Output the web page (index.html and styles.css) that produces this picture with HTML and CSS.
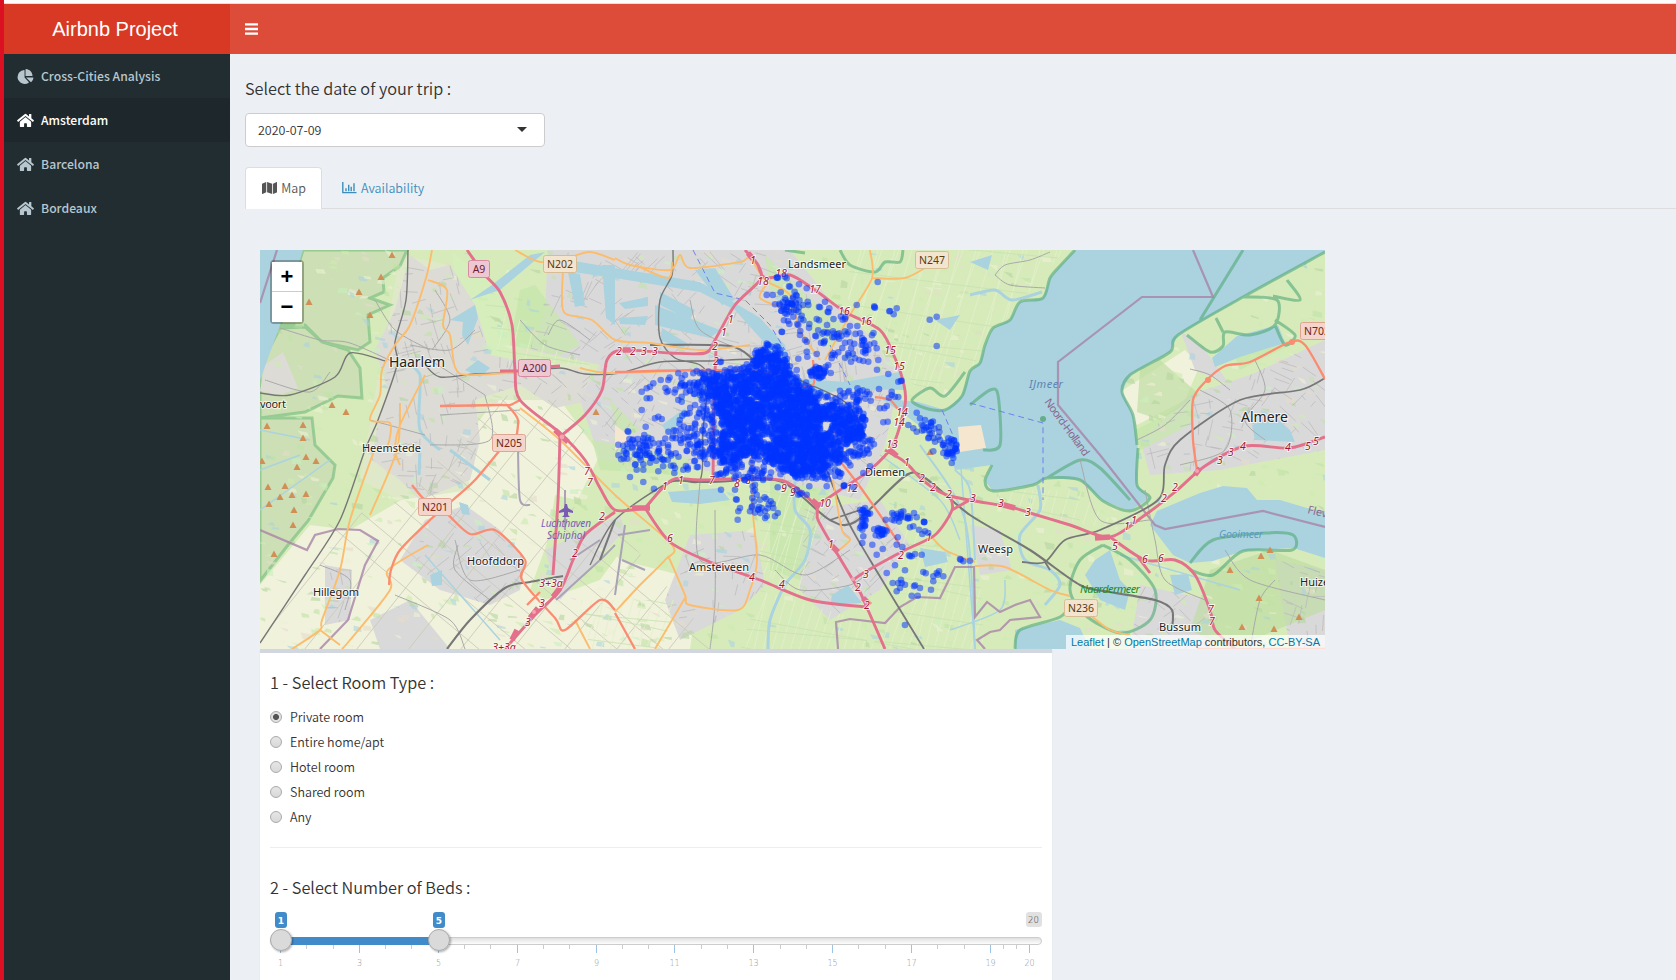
FILE: index.html
```html
<!DOCTYPE html>
<html lang="en">
<head>
<meta charset="utf-8">
<title>Airbnb Project</title>
<link rel="stylesheet" href="styles.css">
</head>
<body>
<svg width="0" height="0" class="defs">
  <symbol id="home" viewBox="0 0 576 512"><path d="M280 148 96 300v164a16 16 0 0 0 16 16h112a16 16 0 0 0 16-16v-96a16 16 0 0 1 16-16h64a16 16 0 0 1 16 16v96a16 16 0 0 0 16 16h112a16 16 0 0 0 16-16V300L296 148a12 12 0 0 0-16 0zM572 251l-84-69V44a12 12 0 0 0-12-12h-56a12 12 0 0 0-12 12v72l-90-74a48 48 0 0 0-61 0L4 251a12 12 0 0 0-1 17l25 31a12 12 0 0 0 17 2l235-194a12 12 0 0 1 16 0l235 194a12 12 0 0 0 17-2l25-31a12 12 0 0 0-1-17z"/></symbol>
</svg>
<div class="page">
  <div class="edge"></div>
  <div class="app">
    <div class="strip"></div>
    <header class="header">
      <div class="logo">Airbnb Project</div>
      <div class="nav"><svg width="14" height="12" viewBox="0 0 14 12"><path d="M0 .2h13v2.4H0zM0 4.8h13v2.4H0zM0 9.4h13v2.4H0z" fill="#fff"/></svg></div>
    </header>
    <div class="body">
      <aside class="side">
        <a class="item"><svg class="ico" viewBox="0 0 544 512"><path d="M528 288H290l158 158c6 6 16 7 22 1a240 240 0 0 0 74-141c1-10-6-18-16-18zM512 224C504 103 409 8 288 0c-9-1-16 7-16 16v224h224c9 0 17-7 16-16zM240 288V50c0-10-9-17-18-16A240 240 0 0 0 0 277c3 130 114 235 243 235 51-1 98-17 137-44 8-6 8-17 2-24z"/></svg>Cross-Cities Analysis</a>
        <a class="item on"><svg class="ico"><use href="#home"/></svg>Amsterdam</a>
        <a class="item"><svg class="ico"><use href="#home"/></svg>Barcelona</a>
        <a class="item"><svg class="ico"><use href="#home"/></svg>Bordeaux</a>
      </aside>
      <main class="main">
        <h4 class="trip">Select the date of your trip :</h4>
        <div class="select"><span>2020-07-09</span><i class="caret"></i></div>
        <nav class="tabs">
          <a class="tab on"><svg width="16" height="14" viewBox="0 0 576 512"><path fill="#555" d="M0 118v346c0 11 11 19 22 15l138-63V32L20 88A32 32 0 0 0 0 118zm192 298 192 64V96L192 32zM554 33 416 96v384l140-56a32 32 0 0 0 20-30V48c0-11-11-19-22-15z"/></svg>Map</a>
          <a class="tab"><svg width="15" height="14" viewBox="0 0 15 14"><path d="M.8 1v10.6H14.5M4 7.3v2.9M6.7 3.8v6.4M9.2 5.8v4.4M12 2.3v7.9" fill="none" stroke="#3c8dbc" stroke-width="1.4"/></svg>Availability</a>
        </nav>
        <section class="mapwrap">
          <svg class="map" viewBox="260 250 1065 399" preserveAspectRatio="none">
            <defs>
              <g id="tri"><path d="M0-3.6 3.5 3H-3.5z" fill="#d08f55"/></g>
              <clipPath id="urbanClip"><path d="M395 310 410 255 430 270 450 265 475 305 490 355 540 365 590 372 592 400 555 408 520 385 475 400 480 440 470 480 420 500 400 480 372 460 378 420 388 390 375 350zM560 250H765L800 290 880 345 895 400 885 445 860 500 780 480 700 470 620 465 590 400 605 360 530 350zM425 520 465 505 500 530 525 560 520 590 490 605 440 590 415 560zM690 535 755 530 765 585 740 610 680 640 665 600zM800 510 880 500 910 545 880 590 830 620 800 590zM1190 395 1250 375 1325 340V450L1220 470 1150 475 1140 440zM1140 585 1210 600 1215 649H1130zM1275 560 1325 570V649H1290zM325 565 352 570 350 620 325 625z"/></clipPath>
              <clipPath id="fieldClip"><path d="M260 650 310 530 400 500 500 395 560 400 600 450 560 500 620 530 720 650z"/></clipPath>
              <clipPath id="polderClip"><path d="M480 280 540 340 590 365 500 365zM860 250H1065L1000 325 970 370 920 395 890 350 840 290zM900 520 980 580 985 649H870L900 600zM760 490 830 500 800 600 760 570zM760 590 860 620 870 649H740zM580 600 680 600 660 649H590zM990 490 1080 490 1120 530 1000 510z"/></clipPath>
            </defs>
            <rect x="260" y="250" width="1065" height="399" fill="#d7ebba"/>
            <path fill="#f1f2dc" d="M260 649V585L310 525 350 530 410 495 480 420 500 392 560 400 600 455 575 505 620 560 700 580 690 649zM1120 392 1185 350 1200 365 1185 400 1137 425z"/>
            <path fill="#d6ecb8" d="M555 495 600 505 625 545 600 580 545 600 530 590 548 540z"/>
            <path fill="#dfe9c9" d="M400 255 450 265 480 360 590 365 585 400 500 400 460 430 470 490 400 500 360 480z"/>
            <path fill="#d5eebb" d="M452 252 500 290 515 365 475 370 462 320z"/>
            <path fill="#cddfb5" d="M303 250H407L400 266 383 278 384 292 370 298 390 305 368 315 370 342 358 350 322 342 305 325 280 325zM280 328 305 327 322 342 348 350 360 368 362 398 338 396 305 412 260 418V366zM260 418 312 418 315 445 335 465 333 478 308 521 288 545 260 581z" stroke="#7fc184" stroke-opacity=".7" stroke-width="3"/>
            <path fill="#dcdbd6" d="M265 365 283 352 298 388 280 395 260 391zM395 310 410 255 430 270 450 265 475 305 490 355 540 365 590 372 592 400 555 408 520 385 475 400 480 440 470 480 420 500 400 480 372 460 378 420 388 390 375 350z"/>
            <path fill="#dad9d9" d="M548 250H790L830 300 880 345 895 400 885 445 860 500 780 480 700 470 600 460 580 400 600 365 530 350 545 310zM425 520 465 505 500 530 525 560 520 590 490 605 440 590 400 560zM690 535 755 530 765 585 740 610 680 640 665 600zM800 510 880 500 910 545 880 590 830 620 800 590zM1190 395 1250 375 1325 340V450L1220 470 1150 475 1140 440zM1140 585 1210 600 1215 649H1130zM1275 560 1325 570V649H1290zM325 565 352 570 350 620 325 625zM970 525 1000 530 1012 570 980 575zM370 620 410 600 450 649H380zM885 350 900 380 885 380zM1180 330 1205 350 1230 385 1195 370zM545 550 620 515 625 530 560 600z"/>
            <g fill="#c8e6ae"><path d="M520 290 535 285 580 345 560 355 510 345zM592 440 690 458 680 475 600 470zM765 255 800 290 850 330 830 350 800 320 770 290zM700 385 725 380 720 400zM770 480 830 490 800 580 770 570zM610 400 640 430 620 440zM1230 345 1255 335 1275 330 1290 345 1240 370zM1135 430 1195 400 1190 425 1140 450z" opacity=".8"/><path d="M1140 370 1160 360 1200 395 1160 420 1137 412zM1210 570 1270 550 1325 570V610L1230 649 1190 630z" fill="#bddc9f" opacity=".65"/></g>
            <g id="texture"></g>
            <g fill="#aad3df">
              <path d="M260 250H303L280 325 260 380z"/>
              <path d="M1075 250 1060 266 1050 278 1043 298 1020 302 1010 320 993 328 985 345 980 363 970 371 962 396 945 410 918 402 880 398 905 415 925 430 940 425 955 470 992 465 985 481 993 491 1033 485 1047 478 1080 480 1103 501 1130 511 1150 498 1137 485 1138 448 1133 415 1122 392 1130 375 1170 352 1178 335 1243 297 1325 252V250z"/>
              <path d="M1157 511 1200 493 1223 486 1247 488 1257 500 1280 500 1307 508 1325 511V558L1303 551 1293 548 1243 551 1213 561 1190 563 1173 555 1150 525z"/>
              <path d="M1212 358 1237 336 1252 332 1278 325 1285 343 1240 357 1215 367zM1252 425 1275 417 1290 430 1295 442 1255 440zM545 256 615 268 700 282 760 318 785 345 793 378 845 382 900 372 905 390 845 389 800 400 780 370 762 340 735 310 700 292 615 278 545 268zM568 272 580 274 585 305 575 307zM602 265 615 265V325L606 318zM619 303 648 297 648 306 625 309zM619 318 648 316 645 325 620 324zM655 305 720 330 710 338 655 325zM660 292 695 310 690 320 660 305zM662 328 690 345 680 348 660 340zM695 270 715 268 735 300 722 305zM668 492 720 488 730 500 700 504 672 502zM832 595 848 585 862 603 830 605zM430 575 442 570 442 585 432 586zM450 320 475 305 478 318 468 345 462 335 463 322zM470 300 492 285 530 255 545 252 500 290zM465 370 478 360 490 368 480 377zM920 548 945 552 948 562 925 567zM1095 560 1110 550 1120 580 1130 590 1125 610 1100 600 1085 575zM1015 630 1060 620 1080 628 1090 649H1015zM1170 575 1188 574 1192 590 1175 595zM459 502 468 505 470 515 462 514zM935 320 960 315 950 330zM970 262 992 255 988 270zM662 425 685 408 688 415 668 435z"/>
            </g>
            <g class="smooth" fill="none" stroke="#aad3df"><path stroke-width="3" d="M970 295 995 290 1012 300 1042 292M420 448 419 475M490 480 450 450M440 450 420 430 420 390 420 375 412 365M795 480 795 510 810 530 805 560 785 585 770 620 768 649M1038 485 1040 510 1020 535 1025 560 1050 570 1060 585 1045 605"/><path stroke-width="1.5" d="M880 455 940 500 960 540M260 430 310 440M260 470 300 455M260 510 330 460M960 455 975 649M425 555 500 640M1120 555 1240 590M950 630 1000 610 1005 580"/><path stroke-width="2" d="M920 445 965 520 975 649M955 470 970 490 975 560"/></g>
            <path fill="#f5e6cf" d="M958 427 981 425 986 448 960 452zM615 425 635 440 615 450z"/>
            <g class="smooth" fill="none" stroke="#52a878" stroke-opacity=".6" stroke-width="3">
              <path d="M1075 250 1060 266 1050 278 1043 298 1020 302 1010 320 993 328 985 345 980 363 970 371 962 396 945 410 925 408 912 400 930 388 945 396 965 372M970 405 990 390 998 395 1000 445 983 450M1325 252 1243 297 1178 335 1170 352 1130 375 1122 392 1133 415 1137 445M992 465 985 481 993 491 1033 485 1047 478 1080 480 1103 501 1130 511 1150 498 1137 485 1138 448M1047 478 1080 460 1100 468 1130 500M1243 250 1200 320M1187 335 1210 352 1223 346 1225 332 1250 335 1275 325 1277 300 1243 297M1275 325 1285 345 1295 335 1275 320M1216 318 1223 332M1273 296 1300 300 1287 280M1190 563 1213 540 1265 533 1293 535 1292 550 1243 551 1213 575 1190 570M1103 545 1080 560 1070 590 1085 615 1120 633 1150 620 1155 590 1130 560 1103 545M1015 649 1020 630 1060 617 1075 600M785 250 805 253M840 250 850 265 875 272 885 262 900 262 903 250"/>
            </g>
            <g fill="none" stroke="#a783a8" stroke-width="2.2" stroke-opacity=".8">
              <path d="M277 250 260 303M1193 250 1213 297 1142 297 1058 362 1058 405 1100 455 1155 525 1165 529 1263 511 1325 527M260 530 307 550 315 535 338 529 360 530 378 541 365 565 348 620 320 649M838 649 836 622 850 619 885 623 900 607 917 597 940 598 955 567 974 567 975 617 987 602 1000 612 1015 605 1030 600 1040 617 1010 620 1000 630 990 632 977 640 985 649"/>
            </g>
            <g fill="none" stroke="#7080f0" stroke-dasharray="6 4" stroke-width="1"><path d="M693 250 715 293 745 300 770 325 785 350M970 403 1043 423V500M830 345 850 385M942 410 955 440"/></g>
            <g class="smooth" fill="none" stroke="#a9a9a9" stroke-width="1">
              <path d="M280 328 320 340 350 343 400 365M375 300 395 330 430 350M430 360 485 395M435 290 450 320 432 350M475 330 450 350 410 345M520 320 545 345 580 355M485 395 490 440 430 445M440 415 520 410M370 420 425 435M395 595 450 620 465 649M700 480 700 560 760 555 805 575 850 550M715 510 715 600 710 649M775 570 800 590 850 585 870 570M1137 440 1165 425 1190 400M1200 390 1230 410 1225 450 1180 465M1255 360 1265 390 1245 420 1265 440M1190 369 1210 375 1230 390M1145 490 1155 540 1165 580 1205 600M1225 550 1250 580 1325 600M1250 649 1260 600 1275 580M320 565 350 580 345 610M690 300 700 330 740 350 770 365M265 380 310 392 330 372M995 275 1005 265 1030 260 1050 252M995 275 1010 285 1045 288M548 335 560 320 590 340M455 540 470 580 520 570M458 545 455 570 490 600M1080 460 1100 520 1150 520"/>
              <path stroke="#a9a3b5" stroke-width="2" d="M625 525 615 595M618 535 650 530M622 560 645 570M565 490 565 530M518 450 520 500 530 505M556 600 600 560 615 545M570 560 600 540"/>
            </g>
            <g class="smooth" fill="none" stroke="#777" stroke-width="1.4">
              <path d="M408 250 406 300 395 342 397 365 378 420 365 450 340 520 305 575 260 643M260 393 290 395 335 377 350 353 385 361M425 365 440 377 475 374 520 372 560 368 585 374 620 373 660 362 710 361 760 360 795 378 845 402 865 435M673 250 672 275 660 300 660 338 675 358 700 365 708 380 703 430 700 480 670 482 615 520 590 565"/>
              <path stroke-width="2.1" d="M447 649 470 620 505 588 530 582 563 576M600 560 615 520M645 509 670 482 710 482 775 480 800 495 830 520 855 522 905 476 925 478 970 515 1030 550 1080 585 1110 592 1155 600 1172 610 1172 630M650 345 730 346 755 360 775 361"/>
              <path stroke-width="1.8" d="M815 440 845 515 870 560 924 649M830 520 860 510M1325 378 1300 390 1240 400 1180 440 1165 465 1158 500 1100 530 1065 540 1045 562 1022 562M1045 562 1050 570"/>
            </g>
            <g class="smooth" fill="none" stroke="#fbbd6d" stroke-width="1.9">
              <path d="M432 250 426 278 410 325 395 345 382 370 380 395 370 420 390 423 388 445 380 450M428 280 447 290 443 325 450 335 455 367 467 375 520 372M515 250 540 262 567 258 590 252 615 260M563 270 562 300 566 314 592 320 615 340 650 343 700 350 750 345M580 368 610 373 700 370M425 375 400 425 395 450 400 465M375 448 350 520 340 570 322 620 320 630 292 649M320 630 340 645M400 403 397 450 370 515M428 545 388 570 390 590 350 640 342 649M520 408 560 440 615 495 672 545 665 560 640 585 615 612M752 415 752 500 757 560 750 590 738 610 690 605 685 595 670 560 667 557M615 258 630 265 670 270 680 255 690 268 740 262 750 258 765 280 790 295 800 330 820 360M870 250 872 278 850 315 825 360M872 278 905 278 930 265M635 265 668 278 672 262M770 280 760 298 790 310M833 480 842 530 850 540 835 553M930 535 945 550 975 562M975 566 1005 567 1050 590 1070 596M1090 615 1110 630 1130 635M575 620 590 649M685 598 655 649"/>
            </g>
            <g class="smooth" fill="none" stroke="#fb8c71" stroke-width="2.3">
              <path d="M440 406 500 405 510 405 520 400M508 406 518 420 515 445M500 450 475 480 453 500 430 520 400 550 391 570 389 585M412 485 425 500 445 512 470 534 495 530 525 560 522 580 555 618 565 630 600 600 615 610M527 605 540 592M615 372 710 370 790 373M790 384 813 385 813 360M835 455 855 480 880 515 900 545M875 397 890 400 900 412M615 613 635 649M1197 649 1325 649M1325 379 1305 345 1290 342 1250 362 1225 366 1205 382 1193 400 1193 440 1197 470M830 430 850 440"/>
            </g>
            <g class="smooth" fill="none" stroke="#e3718b" stroke-width="2.9" stroke-linejoin="round">
              <path d="M467 250 485 275 500 292 512 325 515 370 520 400 560 433 585 460 600 488 615 510 645 508M560 435 558 500 553 575M562 435 585 415 602 390 607 360 622 350 670 353 705 353 715 340 735 305 760 280 758 265 745 250M520 371 500 371M530 368 560 366M758 265 765 278 790 275 815 290 845 312 880 330 895 358 904 385 905 405 893 445 870 470 840 490 815 507M645 508 672 480 700 480 780 480 815 505 818 520 835 550 853 580 860 592 868 610 885 649M645 508 670 542 710 562 760 580 810 600 865 607M716 350 714 400 713 480M885 450 905 462 925 482 950 496 1010 507 1030 513 1070 525 1110 537 1145 515 1175 492 1205 466 1245 446 1290 448 1325 437M950 495 952 510 935 535 905 550 865 572 853 580M952 510 975 497M1110 537 1145 560 1175 560 1195 575 1210 610 1215 630 1235 649M615 512 585 535 573 560 560 590 535 615 505 649M1138 557 1150 573"/>
              <path stroke-width="5.5" d="M555 430 568 442M632 508 650 508M870 605 863 598M890 450 897 456M1095 538 1110 537M1195 475 1200 468M530 618 538 608M512 640 517 630M812 500 820 507M1000 504 1015 508M560 588 553 597M623 350 632 350M748 253 753 259M832 546 838 552"/>
            </g>
            <g fill="#f4a3b0"><circle cx="562" cy="437" r="2.4"/><circle cx="853" cy="579" r="2"/><circle cx="534" cy="612" r="2"/><circle cx="1197" cy="471" r="2"/></g>
            <g fill="#fb8c71"><circle cx="1208" cy="380" r="3"/><circle cx="1292" cy="342" r="3"/></g>
            <g id="peaks"></g>
            <g class="names">
              <text x="389" y="367" textLength="56" class="big">Haarlem</text><text x="1241" y="422" textLength="47" class="big">Almere</text>
              <text x="362" y="452" textLength="59">Heemstede</text><text x="260" y="408" textLength="26">voort</text><text x="313" y="596" textLength="46">Hillegom</text><text x="467" y="565" textLength="57">Hoofddorp</text><text x="788" y="268" textLength="58">Landsmeer</text><text x="689" y="571" textLength="60">Amstelveen</text><text x="865" y="476" textLength="40">Diemen</text><text x="978" y="553" textLength="35">Weesp</text><text x="1159" y="631" textLength="42">Bussum</text><text x="1300" y="586">Huizen</text>
            </g>
            <g class="places">
              <text x="1029" y="388" textLength="34" fill="#5b83b5">IJmeer</text><text x="1219" y="538" textLength="44" fill="#5b9bc4" font-size="10.5">Gooimeer</text><text x="1080" y="593" textLength="60" fill="#1b8a24">Naardermeer</text><text x="541" y="527" textLength="50" fill="#7a5cb5" font-size="10">Luchthaven</text><text x="547" y="539" textLength="38" fill="#7a5cb5" font-size="10">Schiphol</text>
              <path fill="#7a5cb5" d="M565 504h2l1 4 5 3v2l-5-1v3l2 2h-8l2-2v-3l-5 1v-2l5-3z"/>
              <g fill="#8a6890" font-style="normal"><text transform="translate(1044 402) rotate(54)" textLength="68">Noord-Holland</text><text transform="translate(1307 513) rotate(14)">Flevoland</text></g>
              <circle cx="1043" cy="419" r="3" fill="#65ad8b"/>
            </g>
            <g id="exits"></g>
            <g id="shields"></g>
            <g id="rooms"></g>
          </svg>
          <div class="zoom"><b>+</b><b>−</b></div>
          <div class="credit"><a>Leaflet</a> | © <a>OpenStreetMap</a> contributors, <a>CC-BY-SA</a></div>
        </section>
        <section class="box">
          <h4>1 - Select Room Type :</h4>
          <ul class="radios">
            <li><i class="radio on"></i>Private room</li>
            <li><i class="radio"></i>Entire home/apt</li>
            <li><i class="radio"></i>Hotel room</li>
            <li><i class="radio"></i>Shared room</li>
            <li><i class="radio"></i>Any</li>
          </ul>
          <hr>
          <h4 class="beds">2 - Select Number of Beds :</h4>
          <svg class="slider" width="776" height="68" viewBox="0 0 776 68">
            <defs>
              <linearGradient id="track" x2="0" y2="1"><stop stop-color="#dedede"/><stop offset="1" stop-color="#fff"/></linearGradient>
              <filter id="soft" x="-30%" y="-30%" width="170%" height="170%"><feDropShadow dx="1" dy="1" stdDeviation="1.2" flood-opacity=".35"/></filter>
            </defs>
            <g id="ticks"></g>
            <rect x=".5" y="25.5" width="771" height="7" rx="3.5" fill="url(#track)" stroke="#ccc"/>
            <path fill="#428bca" d="M11 25h158v8H11z"/>
            <circle cx="11" cy="28" r="10.5" fill="#dadada" stroke="#aaa" filter="url(#soft)"/>
            <circle cx="169" cy="28" r="10.5" fill="#dadada" stroke="#aaa" filter="url(#soft)"/>
            <rect x="5" y="0" width="12" height="16" rx="3" fill="#428bca"/><rect x="163" y="0" width="12" height="16" rx="3" fill="#428bca"/>
            <rect x="756" y="0" width="16" height="15" rx="3" fill="#e1e1e1"/>
            <text x="11" y="12" class="val">1</text><text x="169" y="12" class="val">5</text><text x="763.5" y="11" class="max">20</text>
          </svg>
        </section>
      </main>
    </div>
  </div>
</div>
<script src="map.js"></script>
</body>
</html>
```

FILE: styles.css
```css
*{box-sizing:border-box}
body{margin:0;height:980px;overflow:hidden;background:#ecf0f5;color:#333;font:350 12.5px/20px "Noto Sans CJK SC","Noto Sans",sans-serif}
.defs{position:absolute}
.page{display:flex;height:980px}
.edge{width:4px;background:#dc1023}
.app{flex:1;display:flex;flex-direction:column;min-width:0}
.strip{height:4px;background:#fcfcfc;border-bottom:1px solid #e3dede}
.header{display:flex;height:50px;background:#dd4b39}
.logo{width:226px;background:#d73925;color:#fff;text-align:center;font:20px/50px "Liberation Sans",Arial,sans-serif;padding-right:4px}
.nav{padding:19px 15px;line-height:0}
.body{flex:1;display:flex;min-height:0}
.side{width:226px;background:#222d32}
.item{display:flex;align-items:center;height:44px;padding-left:13px;color:#b8c7ce;fill:#b8c7ce;font-size:12.2px;font-weight:500}
.item.on{background:#1e282c;color:#fff;fill:#fff}
.ico{width:17px;height:15px;margin-right:7px}
.main{flex:1;padding:23px 0 0 15px;min-width:0}
h4{margin:0;font-size:16.3px;line-height:22px;font-weight:350}
.select{margin-top:14px;width:300px;height:34px;border:1px solid #ccc;border-radius:4px;background:#fff;display:flex;align-items:center;justify-content:space-between;padding:0 17px 0 12px}
.caret{border:5px solid transparent;border-top-color:#333;border-bottom:0;margin-top:-2px}
.tabs{display:flex;margin-top:20px;height:42px;border-bottom:1px solid #ddd}
.tab{display:flex;align-items:center;height:42px;padding:0 15px 2px;border:1px solid transparent;border-bottom:0;color:#3c8dbc}
.tab svg{margin-right:4px}
.tab.on{width:77px;border-color:#ddd;border-radius:4px 4px 0 0;background:#fff;color:#555;padding-left:16px}
.tab:not(.on){padding-left:19px}
.mapwrap{position:relative;margin:41px 0 0 15px;width:1065px;height:399px;overflow:hidden}
.map{display:block;width:1065px;height:399px}
.names{font:11px "Noto Sans",sans-serif;fill:#222;stroke:#fff;stroke-opacity:.7;stroke-width:2px;paint-order:stroke}
.names .big{font-size:14px}
.places{font:italic 11px "Noto Sans",sans-serif}
.exit{font:italic 10.5px "Noto Sans",sans-serif;fill:#a01832;stroke:#fff;stroke-opacity:.75;stroke-width:1.8px;paint-order:stroke;text-anchor:middle}
.shield{font:10.5px "Noto Sans",sans-serif;text-anchor:middle}
.zoom{position:absolute;left:10px;top:10px;width:34px;border:2px solid rgba(0,0,0,.28);border-radius:4px;background-clip:padding-box}
.zoom b{display:block;height:30px;background:#fff;color:#000;text-align:center;font:bold 22px/30px "Liberation Sans",sans-serif}
.zoom b:first-child{border-bottom:1px solid #ccc}
.credit{position:absolute;right:0;bottom:-1px;padding:0 5px;background:rgba(255,255,255,.72);font:11px/15px "Liberation Sans",Arial,sans-serif;color:#333}
.credit a{color:#0078a8}
.box{margin-left:15px;width:792px;height:331px;border-top:4px solid #d2d6de;background:#fff;padding:18px 10px 0;box-shadow:0 1px 1px rgba(0,0,0,.1)}
.radios{list-style:none;margin:14px 0 0;padding:0}
.radios li{display:flex;align-items:center;height:20px;margin-bottom:5px}
.radio{width:12px;height:12px;margin-right:8px;border:1px solid #aaa;border-radius:50%;background:linear-gradient(#e6e6e6,#d8d8d8)}
.radio.on{background:radial-gradient(circle,#555 0 2.6px,#e2e2e2 3.4px)}
hr{margin:20px 0 0;border:0;border-top:1px solid #eee}
.beds{margin-top:28px}
.slider{display:block;margin-top:14px;overflow:visible}
.slider text{text-anchor:middle;font-family:"DejaVu Sans",sans-serif}
.val{font-size:9px;font-weight:bold;fill:#fff}
.max{font-size:8.5px;fill:#333}
.tl{font-size:8px;fill:#8f959c}
```

FILE: map.js
```js
let seed = 7;
const rnd = () => (seed = (seed * 16807) % 2147483647) / 2147483647;
const put = (id, html) => { document.getElementById(id).innerHTML = html; };

// round the polylines of roads, rails and shores into curves
document.querySelectorAll('.smooth path').forEach(path => {
  const out = path.getAttribute('d').split('M').filter(Boolean).map(part => {
    const n = part.trim().split(/\s+/).map(Number), p = [];
    for (let i = 0; i < n.length; i += 2) p.push([n[i], n[i + 1]]);
    let d = `M${p[0]}`;
    for (let i = 0; i < p.length - 1; i++) {
      const a = p[i - 1] || p[i], b = p[i], c = p[i + 1], e = p[i + 2] || c, k = 7;
      d += `C${b[0] + (c[0] - a[0]) / k} ${b[1] + (c[1] - a[1]) / k} ${c[0] - (e[0] - b[0]) / k} ${c[1] - (e[1] - b[1]) / k} ${c[0]} ${c[1]}`;
    }
    return d;
  });
  path.setAttribute('d', out.join(''));
});

// land patches, street grid and field boundaries
let t = '';
for (let i = 0; i < 1300; i++) {
  const x = 260 + rnd() * 1065, y = 250 + rnd() * 399, c = ['#bfe3a6', '#c8f0c0', '#b5d6a0', '#aad3df', '#edf0d5', '#e4dccb', '#cdebb0'][i % 7];
  t += `<path opacity=".6" fill="${c}" d="M${x} ${y}l${2 + rnd() * 9} ${rnd() * 3} ${rnd() * 3 - 1} ${1 + rnd() * 5} ${-2 - rnd() * 8} ${-rnd() * 2}z"/>`;
}
t += '<g clip-path="url(#urbanClip)" stroke="#b9b9bb" stroke-width=".7" fill="none">';
for (let i = 0; i < 1800; i++) {
  const x = 260 + rnd() * 1065, y = 250 + rnd() * 399, a = (i % 2 ? 0.1 : 1.7) + Math.sin(x / 60 + y / 90) * 0.6 + rnd() * 0.3, l = 6 + rnd() * 18;
  t += `<path d="M${x} ${y}l${l * Math.cos(a)} ${l * Math.sin(a)}"/>`;
}
t += '</g><g clip-path="url(#fieldClip)" stroke="#c9cbb9" stroke-width=".9">';
for (let i = 0; i < 15; i++) {
  t += `<path d="M${200 + i * 52} 650l240-300M${180 + i * 46} 400l330 275"/>`;
}
t += '</g><g clip-path="url(#polderClip)" stroke="#e2f0ca" stroke-width=".8">';
for (let i = 0; i < 110; i++) t += `<path d="M${430 + i * 9} 650l${90 + (i % 9) * 8}-400"/>`;
for (let i = 0; i < 30; i++) t += `<path stroke="#c6e1b0" d="M430 ${200 + i * 20}l650 ${60 + (i % 5) * 20}"/>`;
t += '</g>';
put('texture', t);

const peaks = [[392,255],[381,277],[359,292],[309,302],[370,315],[332,405],[346,412],[303,425],[267,426],[303,438],[596,412],[262,461],[306,457],[316,461],[297,467],[268,487],[285,486],[280,497],[292,495],[306,494],[269,504],[294,510],[293,525],[274,554],[930,452],[1270,550],[1261,556],[1230,570],[1259,598],[1299,617],[1242,627],[1274,629]];
put('peaks', peaks.map(p => `<use href="#tri" x="${p[0]}" y="${p[1]}"/>`).join(''));

const exits = [[753,264,1],[763,285,18],[781,277,18],[815,293,17],[844,315,16],[866,325,16],[890,354,15],[899,370,15],[902,416,14],[899,426,14],[892,448,13],[731,323,1],[724,336,1],[715,350,2],[716,365,2],[619,355,2],[633,355,2],[644,355,3],[655,355,3],[587,475,7],[590,486,7],[602,520,2],[575,557,2],[551,587,'3+3a'],[542,607,3],[528,626,3],[504,651,'3+3a'],[665,490,1],[681,484,1],[712,484,7],[737,487,8],[748,484,8],[784,492,9],[793,496,9],[825,507,10],[852,492,12],[907,466,1],[922,482,2],[933,491,2],[949,498,2],[973,502,3],[670,542,6],[752,581,4],[782,588,4],[831,548,1],[929,541,1],[901,559,2],[866,578,3],[858,591,2],[867,609,2],[1001,507,3],[1028,516,3],[1127,530,1],[1134,524,1],[1164,502,2],[1175,491,2],[1115,550,5],[1145,563,6],[1161,562,6],[1211,613,7],[1212,625,7],[1220,464,3],[1231,456,3],[1243,450,4],[1288,451,4],[1308,450,5],[1316,445,5]];
put('exits', exits.map(e => `<text class="exit" x="${e[0]}" y="${e[1]}">${e[2]}</text>`).join(''));

const shields = [['A9',468,260,22,'#edc8d2','#d58ba0','#6b1c36'],['N202',543,255,34,'#f3e4cf','#d8bd94','#5b3c10'],['A200',518,359,33,'#edc8d2','#d58ba0','#6b1c36'],['N205',492,434,34,'#f5d5cb','#dfa593','#6d281a'],['N201',418,498,34,'#f5d5cb','#dfa593','#6d281a'],['N247',915,251,34,'#f3e4cf','#d8bd94','#5b3c10'],['N702',1300,322,34,'#f5d5cb','#dfa593','#6d281a'],['N236',1064,599,34,'#f3e4cf','#d8bd94','#5b3c10']];
put('shields', shields.map(s => `<rect x="${s[1] + .5}" y="${s[2] + .5}" width="${s[3] - 1}" height="17" rx="2" fill="${s[4]}" stroke="${s[5]}"/><text class="shield" x="${s[1] + s[3] / 2}" y="${s[2] + 13}" fill="${s[6]}">${s[0]}</text>`).join(''));

// listings, stored in thirds of a pixel from a sheet origin
const north = '788,111 778,187 778,184 780,188 825,198 823,199 845,190 836,208 944,224 965,215 965,303 725,180 485,98 487,97 489,98 515,100 510,95 552,118 525,125 522,124 575,130 455,150 473,150 497,142 543,150 545,152 512,165 480,178 495,180 515,185 510,160 578,170 580,180 630,170 615,187 612,185 643,190 640,202 638,200 552,187 550,200 515,207 510,205 535,215 560,212 605,222 612,226 636,240 638,262 583,237 523,237 550,240 556,258 501,261 500,260 570,285 601,272 618,293 626,295 555,270 575,290 683,224 690,222 705,243 727,243 735,265 700,262 742,280 695,268 771,271 690,293 705,292 718,296 778,295 785,310 740,300 752,315 790,345 786,374 700,325 708,350 720,340 733,345 745,348 760,350 655,325 660,330 670,322 690,338 650,340 605,327 575,320 550,341 577,335 640,360 632,365 605,385 600,375 585,380 590,390 615,370 620,395 612,400 607,388 545,375 545,395 647,384 820,387 860,407 857,408 850,410 792,432 675,437 830,450 840,455 850,456 822,458 830,440 767,467 795,490 808,490 815,483 805,532 818,530 905,503 318,350 315,351 420,325 460,300 450,310 470,305 485,330 510,330 915,520 930,525 880,540 895,550 905,560 940,545 920,540 950,565 970,575 975,585 1000,580 1010,595 960,590 985,600 1020,610 160,405 137,405 80,440 95,430 105,425 115,415 105,460 95,460 160,437 80,495 190,385 210,390 200,400 235,385 200,415 210,420 225,413 200,455 200,470 190,465 237,447 240,480 260,465 130,515 120,520 140,522 92,545 40,560 38,559 85,580 88,570 60,595 115,595 172,580 195,570 215,560 220,550 240,535 265,500 270,520 262,555 255,450 280,450 245,378 262,383 270,390 255,385';
const south = '45,87 85,102 85,65 65,65 60,50 95,20 143,35 141,33 130,70 180,60 205,65 178,75 240,38 238,40 117,122 315,78 310,80 318,76 325,80 305,80 318,125 347,60 365,60 380,50 405,75 430,90 410,45 450,40 360,125 365,155 363,154 375,180 370,190 368,215 413,115 420,125 425,140 412,150 417,160 415,130 420,110 435,155 467,160 410,178 405,190 430,185 440,180 450,190 475,180 488,195 455,205 480,205 450,210 488,118 550,140 555,138 560,135 575,140 583,115 545,125 635,115 630,90 635,80 645,50 660,65 670,45 687,113 688,112 686,114 715,118 745,75 765,55 720,15 730,25 745,20 700,15 715,25 735,10 735,185 750,180 748,195 750,205 745,215 755,195 740,195 738,235 742,245 735,240 745,265 742,285 772,290 785,320 803,303 790,250 795,245 800,258 782,262 790,240 805,245 815,250 812,215 832,195 845,210 855,210 850,205 865,190 870,208 885,210 880,205 897,195 905,208 885,238 895,235 912,245 927,222 927,221 928,223 930,250 940,255 922,258 848,268 845,290 862,297 882,322 890,325 885,325 900,318 920,320 840,352 815,375 870,367 925,372 932,376 955,385 965,375 972,370 968,380 985,385 955,400 948,425 858,395 860,405 850,405 845,430 855,420 870,410 900,412 897,415 915,420 890,443 908,443 833,405 870,531 1035,333 1037,335 1045,340 1065,338 955,10 985,15 1010,15 1015,30 1010,45 995,25 1025,10 1000,10 1012,20 10,-10';
const pts = [];
const sheet = (s, oy) => s.split(' ').forEach(p => { const [x, y] = p.split(',').map(Number); pts.push([615 + x / 3, oy + y / 3]); });
sheet(north, 245); sheet(south, 448);
const scatter = (cx, cy, rx, ry, n) => { for (let i = 0; i < n; i++) { const a = rnd() * 6.283, r = Math.sqrt(rnd()); pts.push([cx + rx * r * Math.cos(a), cy + ry * r * Math.sin(a)]); } };
[[680,450,42,20,60],[636,452,18,15,40],[698,430,20,26,60],[680,385,24,10,16],[705,388,12,14,45],[795,315,12,24,18],[842,335,36,22,22],[818,373,8,7,22],[855,397,16,12,24],[787,302,9,13,14],[815,465,36,16,70],[860,443,14,14,40],[750,473,33,8,35],[760,505,16,11,10],[930,430,10,10,16],[950,447,8,8,18],[768,352,14,9,30],[866,517,5,10,14],[880,532,7,5,10],[900,517,10,5,10],[835,335,8,5,8],[862,347,8,8,8]].forEach(c => scatter(...c));
const core = [[708,374],[728,372],[748,368],[760,350],[782,356],[795,380],[818,394],[845,404],[863,415],[866,435],[845,440],[845,455],[818,474],[792,477],[775,463],[748,455],[722,466],[714,448],[724,428],[716,410]];
const inside = (x, y) => core.reduce((k, a, i) => { const b = core[(i + core.length - 1) % core.length]; return (a[1] > y) !== (b[1] > y) && x < (b[0] - a[0]) * (y - a[1]) / (b[1] - a[1]) + a[0] ? !k : k; }, false);
const gaps = [[750,396,1.5],[822,402,3],[826,426,4],[768,439,3]];
for (let i = 0; i < 4600; i++) {
  const x = 705 + rnd() * 165, y = 345 + rnd() * 135;
  if (inside(x + (rnd() - .5) * 8, y + (rnd() - .5) * 8) && !gaps.some(g => Math.hypot(x - g[0], y - g[1]) < g[2] + 2)) pts.push([x, y]);
}
put('rooms', pts.map(p => `<circle cx="${p[0].toFixed(1)}" cy="${p[1].toFixed(1)}" r="3.3" fill="#03f" fill-opacity=".52"/>`).join(''));

// slider scale
let s = '';
const px = v => Math.round(10 + (v - 1) * 39.44) + .5;
const marks = [1, 3, 5, 7, 9, 11, 13, 15, 17, 19, 20];
marks.forEach((v, i) => {
  s += `<path stroke="#9cc3e6" d="M${px(v)} 33v8"/><text class="tl" x="${px(v)}" y="54">${v}</text>`;
  if (i < 10) for (const k of [1, 2]) s += `<path stroke="#ccc" d="M${px(v + (marks[i + 1] - v) * k / 3)} 33v4"/>`;
});
put('ticks', s);
```
